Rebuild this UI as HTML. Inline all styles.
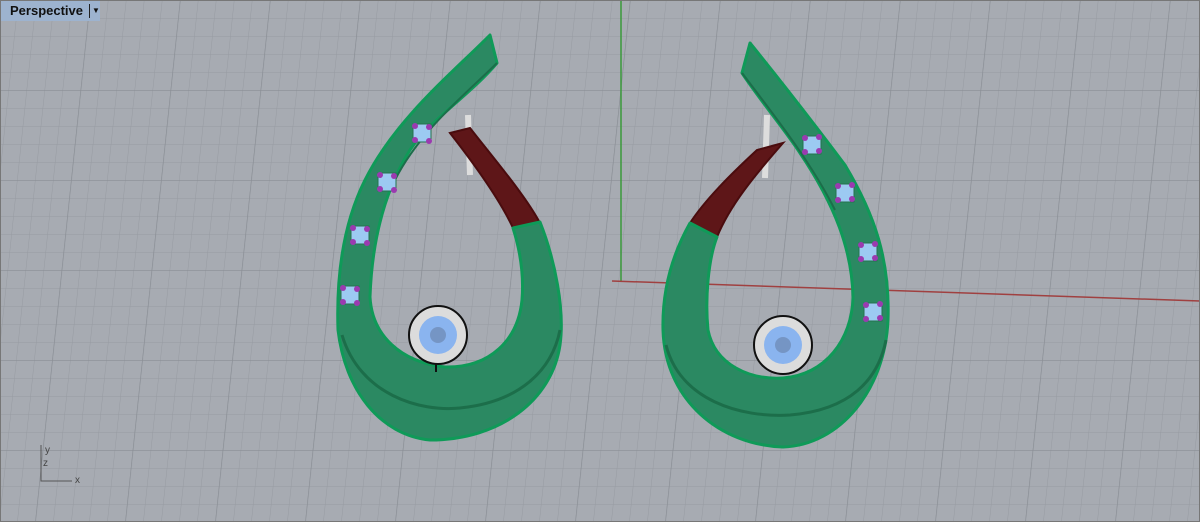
<!DOCTYPE html>
<html><head><style>
html,body{margin:0;padding:0;width:1200px;height:522px;overflow:hidden;background:#a7abb2;}
svg{position:absolute;left:0;top:0}
.tab{position:absolute;left:1px;top:1px;width:99px;height:20px;background:#9db3cf;font:bold 13px "Liberation Sans",sans-serif;color:#111;line-height:20px;padding-left:9px;box-sizing:border-box}
</style></head><body>
<svg width="1200" height="522" viewBox="0 0 1200 522">
<defs>
<pattern id="g" width="18" height="18" patternUnits="userSpaceOnUse">
<path d="M0 0H18M0 0V18" stroke="#979ba2" stroke-width="1" fill="none"/>
</pattern>
<pattern id="G" width="90" height="90" patternUnits="userSpaceOnUse">
<path d="M0 0H90M0 0V90" stroke="#8a8e95" stroke-width="1.3" fill="none"/>
</pattern>
</defs>
<rect width="1200" height="522" fill="#a7abb2"/>
<g transform="skewX(-6)">
<rect x="-200" width="1600" height="522" fill="url(#g)"/>
<rect x="-200" width="1600" height="522" fill="url(#G)"/>
</g>
<line x1="621" y1="0" x2="621" y2="281" stroke="#3a9a3a" stroke-width="1.5"/>
<line x1="612" y1="281" x2="1200" y2="301" stroke="#a04040" stroke-width="1.5"/>
<rect x="0.5" y="0.5" width="1199" height="521" fill="none" stroke="#777" />

<!-- left earring -->
<line x1="468" y1="115" x2="470" y2="175" stroke="#ddd" stroke-width="6"/>
<path d="M450 133 L470 128 C495 160 525 195 540 223 L513 228 C500 200 475 165 450 133Z" fill="#5e1618" stroke="#4a0c0e" stroke-width="2"/>
<path d="M490,35 L497,63 C470,95 430,120 410,150 C385,190 372,240 370,297 C372,335 400,362 445,367 C490,368 518,340 522,300 C524,275 520,250 513,228 L540,222 C555,260 565,310 560,345 C552,400 500,440 430,440 C380,435 345,390 338,330 C336,270 345,220 365,180 C395,120 450,75 490,35Z" fill="#2b8962" stroke="#0f9a58" stroke-width="3" stroke-linejoin="round"/>
<path d="M342 335 C360 395 420 412 460 408 C520 402 552 370 560 330" stroke="#1c6e4a" stroke-width="3" fill="none"/>
<path d="M497 63 C470 90 420 130 395 180" stroke="#1c6e4a" stroke-width="2" fill="none"/>
<circle cx="438" cy="335" r="29" fill="#dcdcdc" stroke="#111" stroke-width="2"/>
<circle cx="438" cy="335" r="19" fill="#8ab4ef"/>
<circle cx="438" cy="335" r="8" fill="#7595c4"/>
<line x1="436" y1="364" x2="436" y2="372" stroke="#111" stroke-width="2"/>

<!-- right earring -->
<line x1="767" y1="115" x2="765" y2="178" stroke="#ddd" stroke-width="6"/>
<path d="M690 223 L717 237 C730 205 755 175 783 143 L757 150 C730 175 705 200 690 223Z" fill="#5e1618" stroke="#4a0c0e" stroke-width="2"/>
<path d="M750,43 C780,80 815,125 845,165 C875,215 890,260 888,320 C885,390 840,445 783,447 C720,445 665,400 663,330 C662,290 672,255 690,223 L717,237 C708,260 705,300 708,330 C715,365 750,380 783,378 C825,375 852,340 853,297 C852,250 835,205 800,153 C785,130 760,100 742,73Z" fill="#2b8962" stroke="#0f9a58" stroke-width="3" stroke-linejoin="round"/>
<path d="M666 345 C680 400 740 418 790 415 C850 410 878 380 886 340" stroke="#1c6e4a" stroke-width="3" fill="none"/>
<path d="M742 73 C770 110 810 160 835 210" stroke="#1c6e4a" stroke-width="2" fill="none"/>
<circle cx="783" cy="345" r="29" fill="#dcdcdc" stroke="#111" stroke-width="2"/>
<circle cx="783" cy="345" r="19" fill="#8ab4ef"/>
<circle cx="783" cy="345" r="8" fill="#7595c4"/>

<g fill="#9ccaf2" stroke="#25734f" stroke-width="1">
<rect x="413" y="124" width="18" height="18"/><rect x="378" y="173" width="18" height="18"/>
<rect x="351" y="226" width="18" height="18"/><rect x="341" y="286" width="18" height="18"/>
<rect x="803" y="136" width="18" height="18"/><rect x="836" y="184" width="18" height="18"/>
<rect x="859" y="243" width="18" height="18"/><rect x="864" y="303" width="18" height="18"/>
</g>
<g fill="#9b3ab0">
<circle cx="415" cy="126" r="3"/><circle cx="429" cy="127" r="3"/><circle cx="415" cy="140" r="3"/><circle cx="429" cy="141" r="3"/>
<circle cx="380" cy="175" r="3"/><circle cx="394" cy="176" r="3"/><circle cx="380" cy="189" r="3"/><circle cx="394" cy="190" r="3"/>
<circle cx="353" cy="228" r="3"/><circle cx="367" cy="229" r="3"/><circle cx="353" cy="242" r="3"/><circle cx="367" cy="243" r="3"/>
<circle cx="343" cy="288" r="3"/><circle cx="357" cy="289" r="3"/><circle cx="343" cy="302" r="3"/><circle cx="357" cy="303" r="3"/>
<circle cx="805" cy="138" r="3"/><circle cx="819" cy="137" r="3"/><circle cx="805" cy="152" r="3"/><circle cx="819" cy="151" r="3"/>
<circle cx="838" cy="186" r="3"/><circle cx="852" cy="185" r="3"/><circle cx="838" cy="200" r="3"/><circle cx="852" cy="199" r="3"/>
<circle cx="861" cy="245" r="3"/><circle cx="875" cy="244" r="3"/><circle cx="861" cy="259" r="3"/><circle cx="875" cy="258" r="3"/>
<circle cx="866" cy="305" r="3"/><circle cx="880" cy="304" r="3"/><circle cx="866" cy="319" r="3"/><circle cx="880" cy="318" r="3"/>
</g>
<path d="M41 445 V481 H72" stroke="#555" fill="none"/>
<text x="45" y="453" font-family="Liberation Sans" font-size="10" fill="#444">y</text>
<text x="43" y="466" font-family="Liberation Sans" font-size="10" fill="#444">z</text>
<text x="75" y="483" font-family="Liberation Sans" font-size="10" fill="#444">x</text>
</svg>
<div class="tab">Perspective<span style="position:absolute;left:88px;top:3px;height:14px;border-left:1px solid #222"></span><span style="position:absolute;left:91px;top:0;font-size:8px">▼</span></div>
</body></html>
